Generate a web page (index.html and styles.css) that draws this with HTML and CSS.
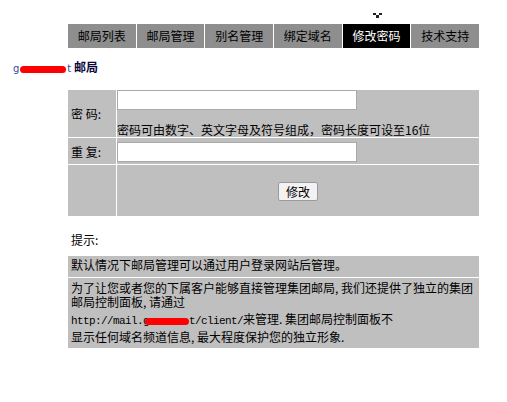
FILE: index.html
```html
<!DOCTYPE html>
<html lang="zh-CN">
<head>
<meta charset="utf-8">
<title>修改密码</title>
<link rel="stylesheet" href="styles.css">
</head>
<body>
<div class="page">
  <nav class="nav">
    <a class="tab">邮局列表</a>
    <a class="tab">邮局管理</a>
    <a class="tab">别名管理</a>
    <a class="tab">绑定域名</a>
    <a class="tab active">修改密码<svg class="marker" width="9" height="5" viewBox="0 0 9 5"><rect x="0" y="0" width="3" height="2" fill="#222"/><rect x="6" y="0" width="3" height="2" fill="#222"/><rect x="3" y="2" width="3" height="3" fill="#222"/></svg></a>
    <a class="tab">技术支持</a>
  </nav>

  <h1 class="heading"><span class="domain">g<span class="blot"></span>t</span> 邮局</h1>

  <div class="form">
    <div class="label">密 码:</div>
    <div class="field field-top">
      <input class="text-input" type="password">
      <div class="hint">密码可由数字、英文字母及符号组成，密码长度可设至16位</div>
    </div>
    <div class="label">重 复:</div>
    <div class="field field-mid">
      <input class="text-input" type="password">
    </div>
    <div class="label"></div>
    <div class="field field-btn">
      <button class="btn" type="button">修改</button>
    </div>
  </div>

  <div class="tips-title">提示:</div>

  <div class="tips">
    <div class="tip tip-one">默认情况下邮局管理可以通过用户登录网站后管理。</div>
    <div class="tip tip-two">
      <div class="tip-para">为了让您或者您的下属客户能够直接管理集团邮局, 我们还提供了独立的集团<br>邮局控制面板, 请通过</div>
      <div class="tip-url"><span class="mono">http://mail.g<span class="blot blot-url"></span>t/client/</span>来管理. 集团邮局控制面板不</div>
      <div class="tip-last">显示任何域名频道信息, 最大程度保护您的独立形象.</div>
    </div>
  </div>
</div>
</body>
</html>
```
FILE: styles.css
```css
html, body {
  margin: 0;
  padding: 0;
  background: #fff;
}
body {
  font-family: "Noto Sans CJK SC", "Liberation Sans", sans-serif;
  font-size: 12px;
  color: #000;
}
.page {
  padding-top: 24px;
}
.nav {
  display: flex;
  gap: 1px;
  width: 411px;
  margin-left: 68px;
  height: 24px;
}
.tab {
  flex: 1;
  background: #8e8e8e;
  color: #000;
  text-align: center;
  line-height: 24px;
  position: relative;
  white-space: nowrap;
}
.tab.active {
  background: #000;
  color: #fff;
}
.marker {
  position: absolute;
  top: -11px;
  left: 30px;
  display: block;
}
.heading {
  margin: 11px 0 0 0;
  padding-left: 13px;
  font-size: 12px;
  line-height: 16px;
  font-weight: bold;
  color: #0a0a3a;
}
.domain {
  color: #2b4c9e;
  font-weight: normal;
  font-family: "DejaVu Sans", sans-serif;
  font-size: 10px;
}
.blot {
  display: inline-block;
  width: 46px;
  height: 7px;
  background: #ff0000;
  border-radius: 4px;
  vertical-align: middle;
  margin: 0 1px;
}
.form {
  margin: 13px 0 0 68px;
  width: 411px;
  display: grid;
  grid-template-columns: 48px 362px;
  grid-template-rows: 47px 26px 51px;
  gap: 1px;
  background: #fff;
}
.label, .field {
  background: #c0bfc0;
}
.label {
  display: flex;
  align-items: center;
  padding-left: 3px;
  white-space: pre;
}
.field-top {
  display: flex;
  flex-direction: column;
  justify-content: space-between;
  align-items: flex-start;
}
.field-mid {
  display: flex;
  align-items: center;
  padding-top: 1px;
}
.field-btn {
  display: flex;
  align-items: center;
  justify-content: center;
  padding-top: 1px;
}
.text-input {
  box-sizing: border-box;
  width: 240px;
  height: 20px;
  margin: 0;
  border: 1px solid #a9a9a9;
  background: #fff;
  padding: 0;
}
.hint {
  line-height: 14px;
  white-space: nowrap;
}
.btn {
  box-sizing: border-box;
  width: 40px;
  height: 19px;
  padding: 0;
  font-family: "Noto Sans CJK SC", sans-serif;
  font-size: 12px;
  line-height: 17px;
  color: #000;
  background: #f2f2f2;
  border: 1px solid #9a9a9a;
  border-radius: 2px;
}
.tips-title {
  margin-top: 16px;
  padding-left: 71px;
  line-height: 16px;
}
.tips {
  margin: 8px 0 0 68px;
  width: 411px;
  display: grid;
  gap: 1px;
  background: #fff;
}
.tip {
  background: #c0bfc0;
  padding: 0 0 0 3px;
  white-space: nowrap;
}
.tip-one {
  height: 21px;
  line-height: 18px;
}
.tip-two {
  padding-top: 3px;
  padding-bottom: 4px;
}
.tip-para {
  line-height: 14px;
}
.tip-url {
  margin-top: 2px;
  line-height: 16px;
}
.mono {
  font-family: "Liberation Mono", monospace;
  font-size: 11px;
  letter-spacing: -0.6px;
}
.blot-url {
  width: 44px;
  margin: 0 0 0 -4px;
}
.tip-last {
  line-height: 15px;
}
```
